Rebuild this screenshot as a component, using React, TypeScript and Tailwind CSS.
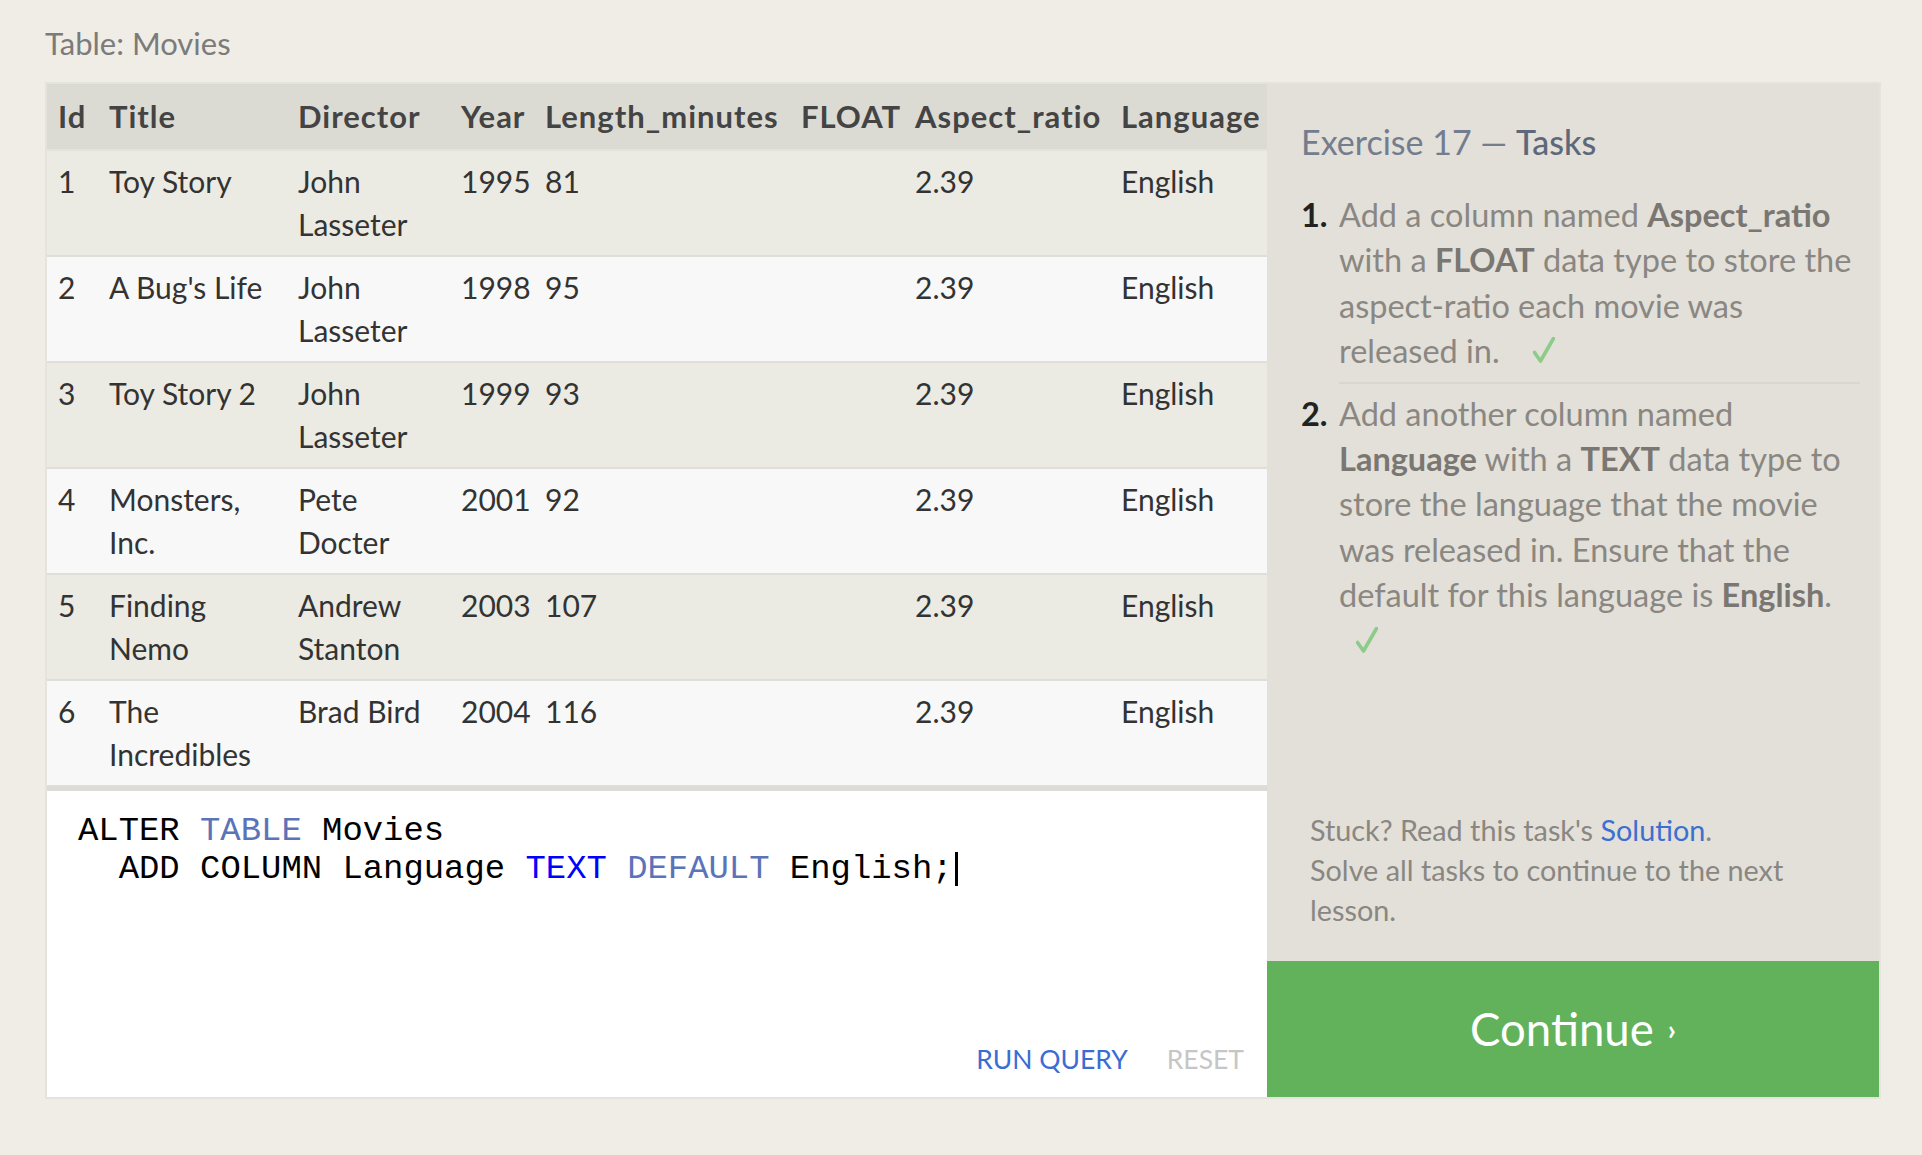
import React from 'react'

const rows = [
  { id: '1', title: ['Toy Story'], director: ['John', 'Lasseter'], year: '1995', len: '81' },
  { id: '2', title: ["A Bug's Life"], director: ['John', 'Lasseter'], year: '1998', len: '95' },
  { id: '3', title: ['Toy Story 2'], director: ['John', 'Lasseter'], year: '1999', len: '93' },
  { id: '4', title: ['Monsters,', 'Inc.'], director: ['Pete', 'Docter'], year: '2001', len: '92' },
  { id: '5', title: ['Finding', 'Nemo'], director: ['Andrew', 'Stanton'], year: '2003', len: '107' },
  { id: '6', title: ['The', 'Incredibles'], director: ['Brad Bird'], year: '2004', len: '116' },
]

const headers = ['Id', 'Title', 'Director', 'Year', 'Length_minutes', 'FLOAT', 'Aspect_ratio', 'Language']

const cols = 'grid grid-cols-[51px_189px_163px_84px_256px_114px_206px_157px]'

function Lines({ items }: { items: string[] }) {
  return (
    <div className="pl-[11px] whitespace-nowrap">
      {items.map((t, i) => (
        <div key={i}>{t}</div>
      ))}
    </div>
  )
}

function Check() {
  return (
    <svg width="22" height="26" viewBox="0 0 22 26" className="inline-block align-baseline">
      <path d="M1.5 15.5 L7.5 24 L20.5 1.5" fill="none" stroke="#8dcb89" strokeWidth="3.6" strokeLinecap="round" strokeLinejoin="round" />
    </svg>
  )
}

export default function App() {
  return (
    <div className="min-h-screen bg-[#efede6] pt-[24px] pl-[45px] font-['Lato',sans-serif]">
      <div className="h-[58px] text-[31px] leading-[38px] text-[#7b7b7b]">Table: Movies</div>

      <div className="flex h-[1017px] w-[1836px] border-2 border-[#e4e3dc]">
        {/* Left: table + editor */}
        <div className="flex w-[1220px] flex-col">
          <div className={`${cols} h-[67px] items-center border-b-2 border-[#e3e2dc] bg-[#dcdbd3] text-[31px] font-bold tracking-[1px] text-[#444]`}>
            {headers.map((h) => (
              <div key={h} className="pl-[11px] whitespace-nowrap">
                {h}
              </div>
            ))}
          </div>

          {rows.map((r, i) => (
            <div
              key={r.id}
              className={`${cols} h-[106px] shrink-0 border-b-2 border-[#dfded9] py-[9px] text-[30px] leading-[43px] text-[#333] ${
                i % 2 === 0 ? 'bg-[#ebeae3]' : 'bg-[#f8f8f8]'
              }`}
            >
              <Lines items={[r.id]} />
              <Lines items={r.title} />
              <Lines items={r.director} />
              <Lines items={[r.year]} />
              <Lines items={[r.len]} />
              <div />
              <Lines items={['2.39']} />
              <Lines items={['English']} />
            </div>
          ))}

          {/* Editor */}
          <div className="flex flex-1 flex-col border-t-[4px] border-[#dcdbd6] bg-white">
            <div className="whitespace-pre pl-[31px] pt-[21px] font-['Liberation_Mono',monospace] text-[33.9px] leading-[38px] text-black">
              <div>
                ALTER <span className="text-[#5b73b8]">TABLE</span> Movies
              </div>
              <div className="flex items-center">
                <span>
                  {'  '}ADD COLUMN Language <span className="text-[#0000ff]">TEXT</span>{' '}
                  <span className="text-[#5b73b8]">DEFAULT</span> English;
                </span>
                <span className="ml-[2px] inline-block h-[34px] w-[3px] bg-black" />
              </div>
            </div>
            <div className="mt-auto flex justify-end gap-[39px] pb-[21px] pr-[23px] text-[26.5px] leading-[34px]">
              <span className="text-[#3b6cd4]">RUN QUERY</span>
              <span className="text-[#c6c6c6]">RESET</span>
            </div>
          </div>
        </div>

        {/* Right: tasks panel */}
        <div className="flex w-[612px] flex-col bg-[#e2e0d9]">
          <div className="pl-[34px] pr-[15px] pt-[38px]">
            <div className="text-[34px] leading-[40px] text-[#737d8e]">
              Exercise 17 — <span className="font-medium text-[#5e687b]">Tasks</span>
            </div>

            <div className="mt-[30px] text-[32.5px] leading-[45.4px] text-[#8a8782]">
              <div className="flex">
                <div className="w-[38px] font-bold text-[#222]">1.</div>
                <div className="w-[521px] border-b-2 border-[#d8d6ce] pb-[8px] whitespace-nowrap">
                  Add a column named <b className="text-[#7a7772]">Aspect_ratio</b>
                  <br />
                  with a <b className="text-[#7a7772]">FLOAT</b> data type to store the
                  <br />
                  aspect-ratio each movie was
                  <br />
                  released in.<span className="ml-[33px]"><Check /></span>
                </div>
              </div>
              <div className="flex pt-[7px]">
                <div className="w-[38px] font-bold text-[#222]">2.</div>
                <div className="w-[521px] whitespace-nowrap">
                  Add another column named
                  <br />
                  <b className="text-[#7a7772]">Language</b> with a <b className="text-[#7a7772]">TEXT</b> data type to
                  <br />
                  store the language that the movie
                  <br />
                  was released in. Ensure that the
                  <br />
                  default for this language is <b className="text-[#7a7772]">English</b>.
                  <br />
                  <span className="ml-[17px]"><Check /></span>
                </div>
              </div>
            </div>
          </div>

          <div className="mt-auto pb-[31px] pl-[43px] text-[28.8px] leading-[40px] text-[#8a8782]">
            Stuck? Read this task's <span className="text-[#3d6fd1]">Solution</span>.
            <br />
            Solve all tasks to continue to the next
            <br />
            lesson.
          </div>

          <div className="flex h-[136px] shrink-0 items-center justify-center bg-[#61b25b] text-white">
            <span className="text-[45.5px] leading-[50px]">Continue</span>
            <span className="ml-[14px] text-[28px] font-bold leading-[50px]">›</span>
          </div>
        </div>
      </div>
    </div>
  )
}
